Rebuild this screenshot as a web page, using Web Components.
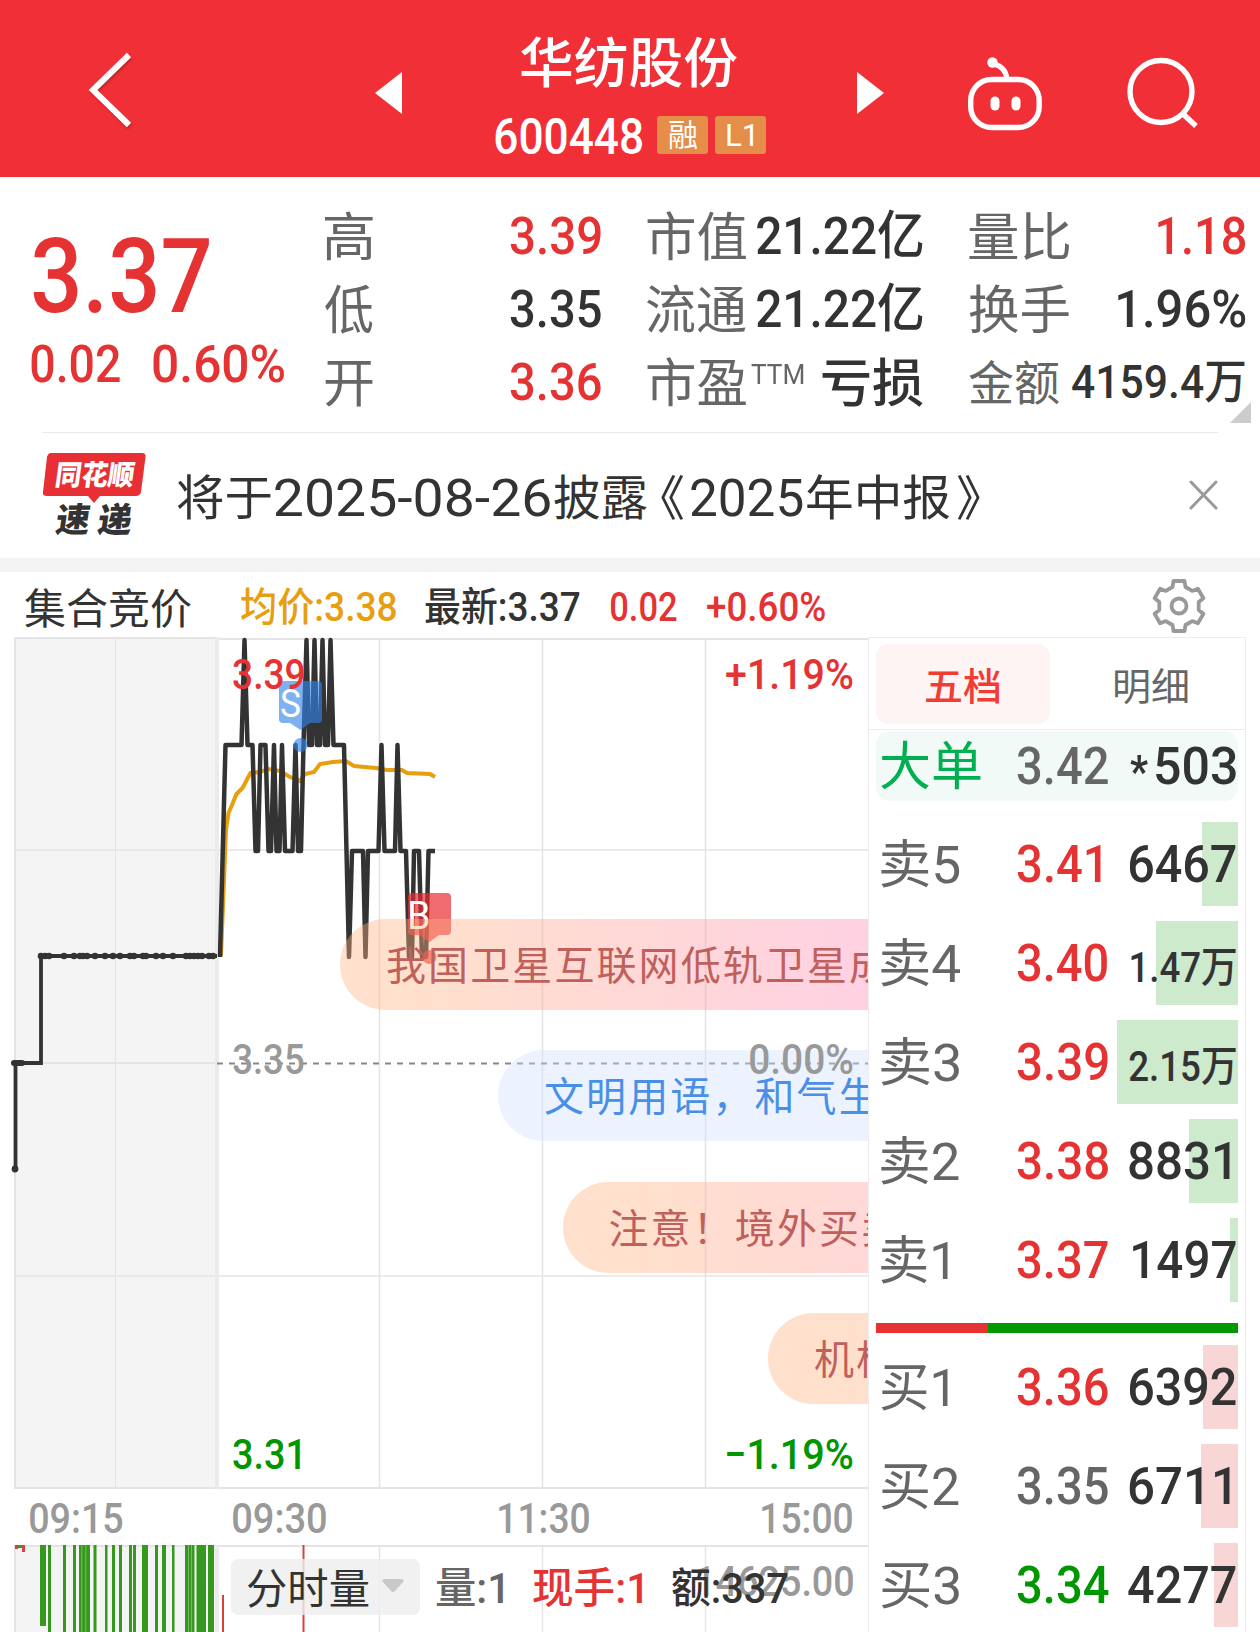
<!DOCTYPE html>
<html lang="zh-CN">
<head>
<meta charset="utf-8">
<title>华纺股份 600448</title>
<style>
   html, body {
      margin: 0;
      background: #fff;
   }
   body {
      width: 1260px;
      height: 1632px;
      overflow: hidden;
      font-family: Roboto, "Noto Sans CJK SC", sans-serif;
      color: #333;
   }
</style>
</head>
<body>
<stock-page></stock-page>

<script>
/* == [ define an element from a style + template ] == */
function Define( { tagName, style, template, ready } ) {
   const tag = document.createElement( "template" );
   tag.innerHTML = `<style>${ style }</style>${ template }`;

   class Lite extends HTMLElement {
      constructor() {
         super();
         this.attachShadow( { mode: "open" } );
         this.shadowRoot.append( tag.content.cloneNode( true ) );
      }
      connectedCallback() {
         if ( ready ) ready( this, this.shadowRoot );
      }
   }
   customElements.define( tagName, Lite );
}

const
   pen = document.createElement( "canvas" ).getContext( "2d" ),

   // text with a width
   fit = ( w, text, cls = "" ) => `<fit-text w="${ w }" class="${ cls }">${ text }</fit-text>`,

   tones = `
      .up { color: #e53232; }
      .down { color: #009600; }
      .dim { color: #666; }
      .mute { color: #999; }
      .mid { font-weight: 500; }
   `
;

/* == [ fit-text: condenses its line so the ink is exactly w pixels wide ] == */
Define( {
   tagName: "fit-text",
   style: `
      :host { display: inline-block; flex: none; white-space: nowrap; }
      span { display: inline-block; transform-origin: 0 50%; }
   `,
   template: `<span><slot></slot></span>`,
   ready( host, root ) {
      const
         css = getComputedStyle( host ),
         w = Number( host.getAttribute( "w" ) )
      ;
      pen.font = `${ css.fontWeight } ${ css.fontSize } ${ css.fontFamily }`;
      const
         m = pen.measureText( host.textContent ),
         left = -m.actualBoundingBoxLeft,
         k = w / ( m.actualBoundingBoxRight - left )
      ;
      host.style.width = `${ w }px`;
      root.querySelector( "span" ).style.transform = `translateX(${ -left * k }px) scaleX(${ k })`;
   }
} );

/* == [ red title bar ] == */
Define( {
   tagName: "stock-header",
   style: `
      :host {
         display: flex;
         box-sizing: border-box;
         height: 177px;
         padding-left: 87px;
         background: #f12f37;
         color: #fff;
      }
      svg { flex: none; display: block; fill: none; stroke: #fff; }
      .back { margin-top: 50px; filter: drop-shadow( 1px 2px 1px #0003 ); }
      .prev, .next { margin-top: 72px; fill: #fff; stroke: none; }
      .prev { margin-left: 240px; }
      .next { margin-left: 91px; }
      .bot { margin: 55px 0 0 82px; }
      .find { margin: 54px 0 0 82px; }
      .name { width: 271px; margin-left: 93px; padding-top: 28px; }
      h1 {
         margin: 0;
         padding-left: 26px;
         font: 500 54px/64px "Noto Sans CJK SC", sans-serif;
      }
      .code { display: flex; align-items: center; margin-top: 22px; height: 42px; font: 500 50px/42px Roboto; }
      .code > fit-text { padding-top: 3px; }
      .tag {
         display: grid;
         place-items: center;
         width: 51px;
         height: 38px;
         border-radius: 3px;
         background: #e48e49;
         font: 400 31px/40px Roboto, "Noto Sans CJK SC", sans-serif;
      }
   `,
   template: `
      <svg class="back" width="48" height="80" stroke-width="6"><path d="M42 5 6 40 42 75"/></svg>
      <svg class="prev" width="27" height="42"><path d="M27 0V42L0 21Z"/></svg>
      <div class="name">
         <h1>${ fit( 216, "华纺股份" ) }</h1>
         <div class="code">
            ${ fit( 147, "600448" ) }
            <div class="tag" style="margin-left:15px">${ fit( 28, "融" ) }</div>
            <div class="tag" style="margin-left:7px">${ fit( 27, "L1" ) }</div>
         </div>
      </div>
      <svg class="next" width="27" height="42"><path d="M0 0V42L27 21Z"/></svg>
      <svg class="bot" width="79" height="78" stroke-width="5.4">
         <rect x="4.7" y="24.5" width="68.5" height="48" rx="21"/>
         <path d="M28 9C36 11 40 16 41 24"/>
         <g fill="#fff" stroke="none">
            <circle cx="26.5" cy="7.5" r="5.2"/>
            <rect x="24.5" y="41.5" width="9" height="14" rx="4.5"/>
            <rect x="45.5" y="41.5" width="9" height="14" rx="4.5"/>
         </g>
      </svg>
      <svg class="find" width="76" height="76" stroke-width="5.4">
         <circle cx="34" cy="37.5" r="31"/><path d="M55 59 69 72"/>
      </svg>
   `
} );

/* == [ price and key numbers ] == */
const
   stats = [
      [
         [ 48, "高", 91, "3.39", "up" ],
         [ 48, "低", 91, "3.35", "" ],
         [ 48, "开", 91, "3.36", "up" ]
      ],
      [
         [ 99, "市值", 166, "21.22亿", "" ],
         [ 99, "流通", 166, "21.22亿", "" ],
         [ 99, "市盈", 101, "亏损", "han", "TTM" ]
      ],
      [
         [ 100, "量比", 87, "1.18", "up" ],
         [ 100, "换手", 127, "1.96%", "" ],
         [ 90, "金额", 173, "4159.4万", "small" ]
      ]
   ],
   statRow = ( [ lw, label, vw, value, cls, sup ] ) => `
      <div class="row ${ cls === "small" ? cls : "" }">
         ${ fit( lw, label, "dim han" ) }
         ${ sup ? fit( 53, sup, "dim sup" ) : "" }
         ${ fit( vw, value, `value ${ cls }` ) }
      </div>`
;

Define( {
   tagName: "stock-quote",
   style: `
      ${ tones }
      :host { display: flex; position: relative; height: 255px; }
      .now { flex: none; width: 294px; padding-left: 31px; }
      .price { height: 100px; margin: 50px 0 0 2px; font: 500 104px/100px Roboto; }
      .change { display: flex; gap: 33px; margin-top: 13px; font: 500 52px/50px Roboto; }
      .col { width: 275.5px; padding-top: 23px; }
      .col + .col { margin-left: 46.5px; }
      .row { display: flex; height: 73px; font-size: 52px; line-height: 73px; }
      .row .han { line-height: 77px; }
      .small { font-size: 47px; line-height: 72px; }
      .small .han { line-height: 75px; }
      .value { margin-left: auto; font-weight: 500; }
      .sup { margin-left: 5px; font-size: 28px; line-height: 57px; font-weight: 400; }
      .line { position: absolute; left: 42px; right: 42px; bottom: -1px; height: 1px; background: #e9e9e9; }
      .corner { position: absolute; right: 9px; bottom: 9px; fill: #ccc; }
   `,
   template: `
      <div class="now up">
         <div class="price">${ fit( 176, "3.37" ) }</div>
         <div class="change">${ fit( 89, "0.02" ) }${ fit( 131, "0.60%" ) }</div>
      </div>
      ${ stats.map( col => `<div class="col">${ col.map( statRow ).join( "" ) }</div>` ).join( "" ) }
      <svg class="corner" width="21" height="21"><path d="M21 0V21H0Z"/></svg>
      <div class="line"></div>
   `
} );

/* == [ news line ] == */
Define( {
   tagName: "stock-notice",
   style: `
      :host {
         display: flex;
         align-items: center;
         box-sizing: border-box;
         height: 126px;
         padding: 0 42px 0 42px;
         font-size: 48px;
         line-height: 60px;
      }
      .logo { margin-right: 29px; overflow: visible; font: 900 28px "Noto Sans CJK SC"; }
      .text { display: flex; align-items: center; gap: 4px; padding-top: 7px; }
      .num { font-size: 52px; line-height: 56px; }
      .close { margin-left: auto; stroke: #999; stroke-width: 3; stroke-linecap: round; }
   `,
   template: `
      <svg class="logo" width="106" height="90">
         <path fill="#e82f33" d="M9 3H100Q104 3 103.500 7L99 42Q98 46 94 46H58L52 53 46 46H5Q0 46 1 42L5 7Q6 3 9 3Z"/>
         <g transform="skewX(-8)">
            <text x="17" y="35" fill="#fff" textLength="79" lengthAdjust="spacingAndGlyphs">同花顺</text>
            <text x="24" y="82" font-size="34" fill="#333" textLength="76">速递</text>
         </g>
      </svg>
      <div class="text">
         ${ fit( 94, "将于" ) }${ fit( 275, "2025-08-26", "num" ) }${ fit( 93, "披露" ) }
         <fit-text w="23" style="margin-left:10px">《</fit-text>
         <fit-text w="112" class="num" style="margin-left:3px">2025</fit-text>
         ${ fit( 143, "年中报" ) }
         <fit-text w="23" style="margin-left:3px">》</fit-text>
      </div>
      <svg class="close" width="29" height="30"><path d="M2 2 27 28M27 2 2 28"/></svg>
   `
} );

/* == [ line above the chart ] == */
const gear = () => {
   const pts = [];
   for ( let k = 0; k < 6; k++ ) {
      const a = k * Math.PI / 3, c = Math.cos( a ), s = Math.sin( a );
      for ( const [ x, y ] of [ [ -6.5, -19 ], [ -5.5, -25 ], [ 5.5, -25 ], [ 6.5, -19 ] ] )
         pts.push( `${ ( x * c - y * s ).toFixed( 1 ) },${ ( x * s + y * c ).toFixed( 1 ) }` );
   }
   return pts.join( " " );
};

Define( {
   tagName: "chart-legend",
   style: `
      ${ tones }
      :host {
         display: flex;
         align-items: center;
         box-sizing: border-box;
         height: 65px;
         padding: 5px 53px 0 25px;
         font-size: 40px;
         line-height: 62px;
      }
      .mid { padding-top: 1px; }
      .gear { margin: -3px 0 0 auto; fill: none; stroke: #999; stroke-width: 3.8; stroke-linejoin: round; }
   `,
   template: `
      <fit-text w="166" style="font-size:42px;padding-top:5px">集合竞价</fit-text>
      <fit-text w="155" class="mid" style="margin-left:50px;color:#e79e0f">均价:3.38</fit-text>
      <fit-text w="155" class="mid" style="margin-left:29px">最新:3.37</fit-text>
      <fit-text w="66" class="mid up" style="margin-left:31px">0.02</fit-text>
      <fit-text w="118" class="mid up" style="margin-left:30px">+0.60%</fit-text>
      <svg class="gear" width="56" height="56" viewBox="-28 -28 56 56">
         <polygon points="${ gear() }"/><circle r="7.5"/>
      </svg>
   `
} );

/* == [ chart ] == */
const
   // price levels: 3.39 / 3.38 / 3.37 / 3.36
   T = 640, H = 745, M = 851, L = 957,
   price = [
      [ 220, L ], [ 225.500, H ], [ 241.500, H ], [ 244.500, T ], [ 247.500, H ], [ 252.500, H ], [ 255.500, M ], [ 258, M ],
      [ 260.500, H ], [ 265.500, H ], [ 268.500, M ], [ 271, M ], [ 274, H ], [ 276.500, M ], [ 279.500, M ], [ 282, H ],
      [ 285, M ], [ 292.500, M ], [ 295.500, H ], [ 298, M ], [ 301, M ], [ 303.500, H ], [ 306.500, T ], [ 309, H ],
      [ 312, H ], [ 314.500, T ], [ 317, H ], [ 320, H ], [ 322.500, T ], [ 325, H ], [ 328, H ], [ 330.500, T ],
      [ 333.500, H ], [ 344, H ], [ 349, L ], [ 352, M ], [ 363, M ], [ 365.500, L ], [ 368, M ], [ 378.500, M ],
      [ 381.500, H ], [ 384.500, M ], [ 395, M ], [ 397.500, H ], [ 400.500, M ], [ 406, M ], [ 409, L ], [ 412, L ],
      [ 414, M ], [ 419, M ], [ 422, L ], [ 426, L ], [ 428.500, M ], [ 435, M ]
   ],
   average = [
      [ 221, 956 ], [ 224, 880 ], [ 226, 830 ], [ 228.500, 813 ], [ 232, 805 ], [ 236.500, 794 ], [ 242.500, 788 ], [ 250.500, 773 ],
      [ 260, 772 ], [ 268, 769 ], [ 280, 771 ], [ 290, 777 ], [ 300, 781 ], [ 305, 774 ], [ 314, 772 ], [ 320, 764 ],
      [ 333, 762 ], [ 346, 761 ], [ 354, 766 ], [ 376, 768 ], [ 387, 770 ], [ 402, 770 ], [ 407, 773 ], [ 430, 774 ], [ 435, 777 ]
   ],
   auction = [
      41, 45, 49, 64, 74, 80, 83, 87, 95, 105, 113, 120, 130, 134, 143, 146, 156, 163, 173, 186, 190, 194, 198, 202, 209, 213
   ],
   // x, width, bottom
   bars = [
      [ 40, 6, 1626 ], [ 48, 3 ], [ 63, 3 ], [ 73, 3 ], [ 79, 11 ], [ 93.500, 3 ], [ 105, 2.500 ], [ 112, 3 ], [ 119, 3 ],
      [ 129, 3 ], [ 133, 3 ], [ 142, 6 ], [ 155, 3 ], [ 162, 4 ], [ 172, 2.500 ], [ 185, 9.500 ], [ 196.500, 9.500 ], [ 208, 6 ]
   ],
   vline = ( x, a, b, w = 1.5 ) => `<path stroke-width="${ w }" d="M${ x } ${ a }V${ b }"/>`,
   hline = ( y, a, b, w = 1.5 ) => `<path stroke-width="${ w }" d="M${ a } ${ y }H${ b }"/>`
;

Define( {
   tagName: "chart-plot",
   style: `:host, svg { display: block; }`,
   template: `
      <svg width="868" height="995" viewBox="0 637 868 995" fill="none">
         <path fill="#f4f4f4" d="M14 637H218V1489H14ZM14 1545H218V1632H14Z"/>
         <g stroke="#e4e4e4">
            ${ vline( 115.500, 637, 1489, 1 ) }
            ${ [ 379.500, 542.500, 705.500 ].map( x => vline( x, 639, 1489 ) + vline( x, 1546, 1632 ) ).join( "" ) }
            ${ hline( 850, 14, 868 ) }${ hline( 1063, 14, 218, 2 ) }${ hline( 1276, 14, 868 ) }
            ${ hline( 638, 14, 218, 2 ) }${ hline( 639, 218, 868, 2 ) }
            ${ hline( 1488, 14, 868, 2 ) }${ hline( 1546, 14, 868, 2 ) }
            ${ vline( 15, 637, 1489, 2 ) }${ vline( 15, 1545, 1632, 2 ) }
         </g>
         <g stroke="#ebebeb">${ vline( 217, 637, 1489, 4 ) }${ vline( 217, 1545, 1632, 4 ) }</g>
         <path stroke="#888" stroke-width="2" stroke-dasharray="6 6" d="M217 1063.500H868"/>

         <polyline stroke="#e79e0f" stroke-width="4" points="${ average.join( " " ) }"/>
         <g stroke="#333" stroke-linejoin="round">
            <polyline stroke-width="4.5" points="${ price.join( " " ) }"/>
            <path stroke-width="3.800" stroke-linejoin="miter" d="M15.500 1169V1063H41V956H217"/>
         </g>
         <g fill="#333">
            <circle cx="15" cy="1169" r="3.400"/>
            <rect x="11" y="1060" width="14" height="6" rx="3"/>
            ${ auction.map( x => `<circle cx="${ x }" cy="956" r="3.300"/>` ).join( "" ) }
         </g>

         <g fill="#36981f">
            ${ bars.map( ( [ x, w, b = 1632 ] ) => `<rect x="${ x }" y="1545" width="${ w }" height="${ b - 1545 }"/>` ).join( "" ) }
            <rect x="18" y="1545" width="4" height="3"/>
         </g>
         <g fill="#8fc983">
            <rect x="81.500" y="1545" width=".7" height="87"/><rect x="85.500" y="1545" width=".7" height="87"/>
            <rect x="188" y="1545" width=".7" height="87"/><rect x="191" y="1545" width=".7" height="87"/>
         </g>
         <g fill="#d94040">
            <rect x="15" y="1545" width="3" height="4"/>
            <rect x="22" y="1545" width="3" height="7"/>
            <rect x="222" y="1595" width="2" height="37"/>
            <rect x="302.500" y="1545" width="2" height="87"/>
         </g>
      </svg>
   `
} );

// trade pin: square flag, pointer and the dot on the line
Define( {
   tagName: "trade-pin",
   style: `
      :host { position: absolute; width: 43px; height: 72px; color: #fff; font: 400 39px/46px Roboto; }
      .flag { width: 43px; height: 42px; border-radius: 4px; background: var( --pin ); }
      svg { display: block; fill: var( --pin ); }
   `,
   template: `
      <div class="flag"><slot></slot></div>
      <svg width="43" height="30"><path d="M11 0H31L21.500 7Z"/><circle cx="21.500" cy="22" r="7"/></svg>
   `
} );

// floating comment
Define( {
   tagName: "bullet-chat",
   style: `
      :host {
         display: block;
         box-sizing: border-box;
         flex: none;
         height: 91px;
         width: 900px;
         padding-left: 46px;
         border-radius: 46px;
         background: linear-gradient( 90deg, rgba( 255, 178, 128, .4 ) 8%, rgba( 255, 137, 187, .4 ) 62% );
         color: #c0605c;
         font: 400 40px/89px "Noto Sans CJK SC", sans-serif;
         letter-spacing: 2.1px;
         white-space: nowrap;
      }
      :host( [cool] ) { background: rgba( 207, 225, 252, .4 ); color: #4a8fe7; }
   `,
   template: `<slot></slot>`
} );

Define( {
   tagName: "stock-chart",
   style: `
      ${ tones }
      :host {
         display: grid;
         position: relative;
         flex: none;
         width: 868px;
         height: 995px;
         overflow: hidden;
      }
      :host > * { grid-area: 1 / 1; min-width: 0; }
      .axis { display: flex; flex-direction: column; font: 500 42px/42px Roboto; z-index: 2; }
      .axis > div { display: flex; justify-content: space-between; flex: none; height: 42px; padding: 0 15px 0 233px; }
      .axis > .time { justify-content: flex-start; padding: 0 0 0 30px; }
      .chats { display: flex; flex-direction: column; gap: 40.4px; padding-top: 282px; z-index: 1; }
      .volume { display: flex; align-items: center; align-self: end; height: 56px; margin: 0 0 17px 231px; font-size: 42px; line-height: 60px; z-index: 3; }
      .pick {
         display: flex;
         align-items: center;
         box-sizing: border-box;
         width: 189px;
         height: 56px;
         padding: 0 16px;
         border-radius: 7px;
         background: #eeeeeed0;
      }
      .pick fit-text { padding-top: 6px; }
      .volume > fit-text { padding-top: 4px; }
      .pick svg { margin: -2px 0 0 auto; fill: #c9c9c9; }
   `,
   template: `
      <chart-plot></chart-plot>
      <div class="axis">
         <div style="margin-top:17px">${ fit( 71, "3.39", "up" ) }${ fit( 127, "+1.19%", "up" ) }</div>
         <div style="margin-top:343px" class="mute">${ fit( 71, "3.35" ) }${ fit( 103, "0.00%" ) }</div>
         <div style="margin-top:353px" class="down">${ fit( 67, "3.31" ) }${ fit( 126, "−1.19%" ) }</div>
         <div style="margin-top:22px" class="time mute">
            ${ fit( 93, "09:15" ) }
            <fit-text w="93" style="margin-left:110px">09:30</fit-text>
            <fit-text w="90" style="margin-left:173px">11:30</fit-text>
            <fit-text w="90" style="margin-left:173px">15:00</fit-text>
         </div>
         <div style="margin-top:21px;justify-content:flex-end" class="mute">${ fit( 156, "14625.00" ) }</div>
      </div>
      <trade-pin style="left:279px;top:44px;--pin:#3182eaa0"><fit-text w="19" style="margin-left:2px">S</fit-text></trade-pin>
      <trade-pin style="left:408px;top:256px;--pin:#ea2a30b0"><fit-text w="19" style="margin-left:2px">B</fit-text></trade-pin>
      <div class="chats">
         <bullet-chat style="margin-left:340px">我国卫星互联网低轨卫星成</bullet-chat>
         <bullet-chat style="margin-left:498px" cool>文明用语，和气生</bullet-chat>
         <bullet-chat style="margin-left:562.500px">注意！境外买卖</bullet-chat>
         <bullet-chat style="margin-left:768px">机构</bullet-chat>
      </div>
      <div class="volume">
         <div class="pick">${ fit( 122, "分时量" ) }<svg width="22" height="14"><path d="M2 0H20Q23 1 21 3L13 12Q11 14 9 12L1 3Q-1 1 2 0Z"/></svg></div>
         <fit-text w="67" class="dim mid" style="margin-left:16px">量:1</fit-text>
         <fit-text w="109" class="up mid" style="margin-left:30px">现手:1</fit-text>
         <fit-text w="116" class="mid" style="margin-left:30px">额:337</fit-text>
      </div>
   `
} );

/* == [ order book ] == */
const
   // label, its width, price, width, tone, volume, width, depth bar
   sells = [
      [ "卖5", 79, "3.41", 84, "up", "6467", 107, 36 ],
      [ "卖4", 80, "3.40", 90, "up", "1.47万", 105, 82 ],
      [ "卖3", 78, "3.39", 91, "up", "2.15万", 107, 121 ],
      [ "卖2", 78, "3.38", 91, "up", "8831", 101, 49 ],
      [ "卖1", 67, "3.37", 91, "up", "1497", 103, 8 ]
   ],
   buys = [
      [ "买1", 67, "3.36", 91, "up", "6392", 107, 35 ],
      [ "买2", 78, "3.35", 91, "dim", "6711", 101, 37 ],
      [ "买3", 78, "3.34", 92, "down", "4277", 108, 24 ]
   ],
   level = ( [ label, lw, p, pw, tone, vol, vw, depth ] ) => `
      <div class="level" style="--depth:${ depth }px">
         <div class="label dim">${ fit( lw, label ) }</div>
         ${ fit( pw, p, `mid ${ tone }` ) }
         ${ fit( vw, vol, `vol mid ${ vol.includes( "万" ) ? "small" : "" } ${ vol.endsWith( "1" ) ? "one" : "" }` ) }
      </div>`
;

Define( {
   tagName: "order-book",
   style: `
      ${ tones }
      :host {
         display: block;
         box-sizing: border-box;
         width: 378px;
         height: 1010px;
         padding: 0 7px;
         border: 1px solid #ececec;
      }
      .tabs { display: flex; height: 92px; margin: 0 -7px; padding: 6px 7px; box-sizing: border-box; border-bottom: 1px solid #ececec; font-size: 38px; line-height: 86px; }
      .tabs div { display: grid; flex: none; justify-content: center; width: 174px; height: 80px; border-radius: 12px; }
      .tabs .on { background: #fff4f4; color: #f13c34; font-weight: 500; }
      .tabs .off { width: 203px; }
      .big, .level { display: flex; align-items: center; font-size: 52px; line-height: 84px; }
      .big > .mid, .level > .mid { padding-top: 2px; }
      .label { width: 136px; padding: 3px 0 0 5px; box-sizing: border-box; }
      .vol { margin-left: auto; margin-right: 2px; }
      .vol.one { margin-right: 8px; }
      .level > .small { padding-top: 9px; font-size: 42px; }
      .big { height: 70px; margin-top: 1px; border-radius: 14px; background: #f1faf6; }
      .big .label { color: #00b050; }
      .big .label + * { margin-left: 5px; }
      .big > .star { margin: 0 8px 0 auto; font-size: 44px; padding-top: 12px; font-weight: 700; }
      .level { height: 84px; margin-top: 15px; background: linear-gradient( var( --bar ), var( --bar ) ) 100% 0 / var( --depth ) 100% no-repeat; }
      .level .label + * { margin-left: 5px; }
      .sells { --bar: #cdeacd; padding-top: 6px; }
      .buys { --bar: #f9d6d6; margin-top: -3px; }
      .ratio { display: flex; height: 10px; margin-top: 21px; background: #009a00; }
      .ratio i { width: 112px; background: #e53232; }
   `,
   template: `
      <div class="tabs">
         <div class="on">${ fit( 74, "五档" ) }</div>
         <div class="off dim">${ fit( 73, "明细" ) }</div>
      </div>
      <div class="big">
         <div class="label">${ fit( 100, "大单" ) }</div>
         ${ fit( 91, "3.42", "dim mid" ) }
         ${ fit( 18, "*", "star mid" ) }
         <fit-text w="80" class="mid" style="margin-right:2px">503</fit-text>
      </div>
      <div class="sells">${ sells.map( level ).join( "" ) }</div>
      <div class="ratio"><i></i></div>
      <div class="buys">${ buys.map( level ).join( "" ) }</div>
   `
} );

/* == [ page ] == */
Define( {
   tagName: "stock-page",
   style: `
      :host { display: block; }
      .band { height: 14px; background: #f4f4f4; }
      main { display: flex; }
   `,
   template: `
      <stock-header></stock-header>
      <stock-quote></stock-quote>
      <stock-notice></stock-notice>
      <div class="band"></div>
      <chart-legend></chart-legend>
      <main>
         <stock-chart></stock-chart>
         <order-book></order-book>
      </main>
   `
} );
</script>
</body>
</html>
